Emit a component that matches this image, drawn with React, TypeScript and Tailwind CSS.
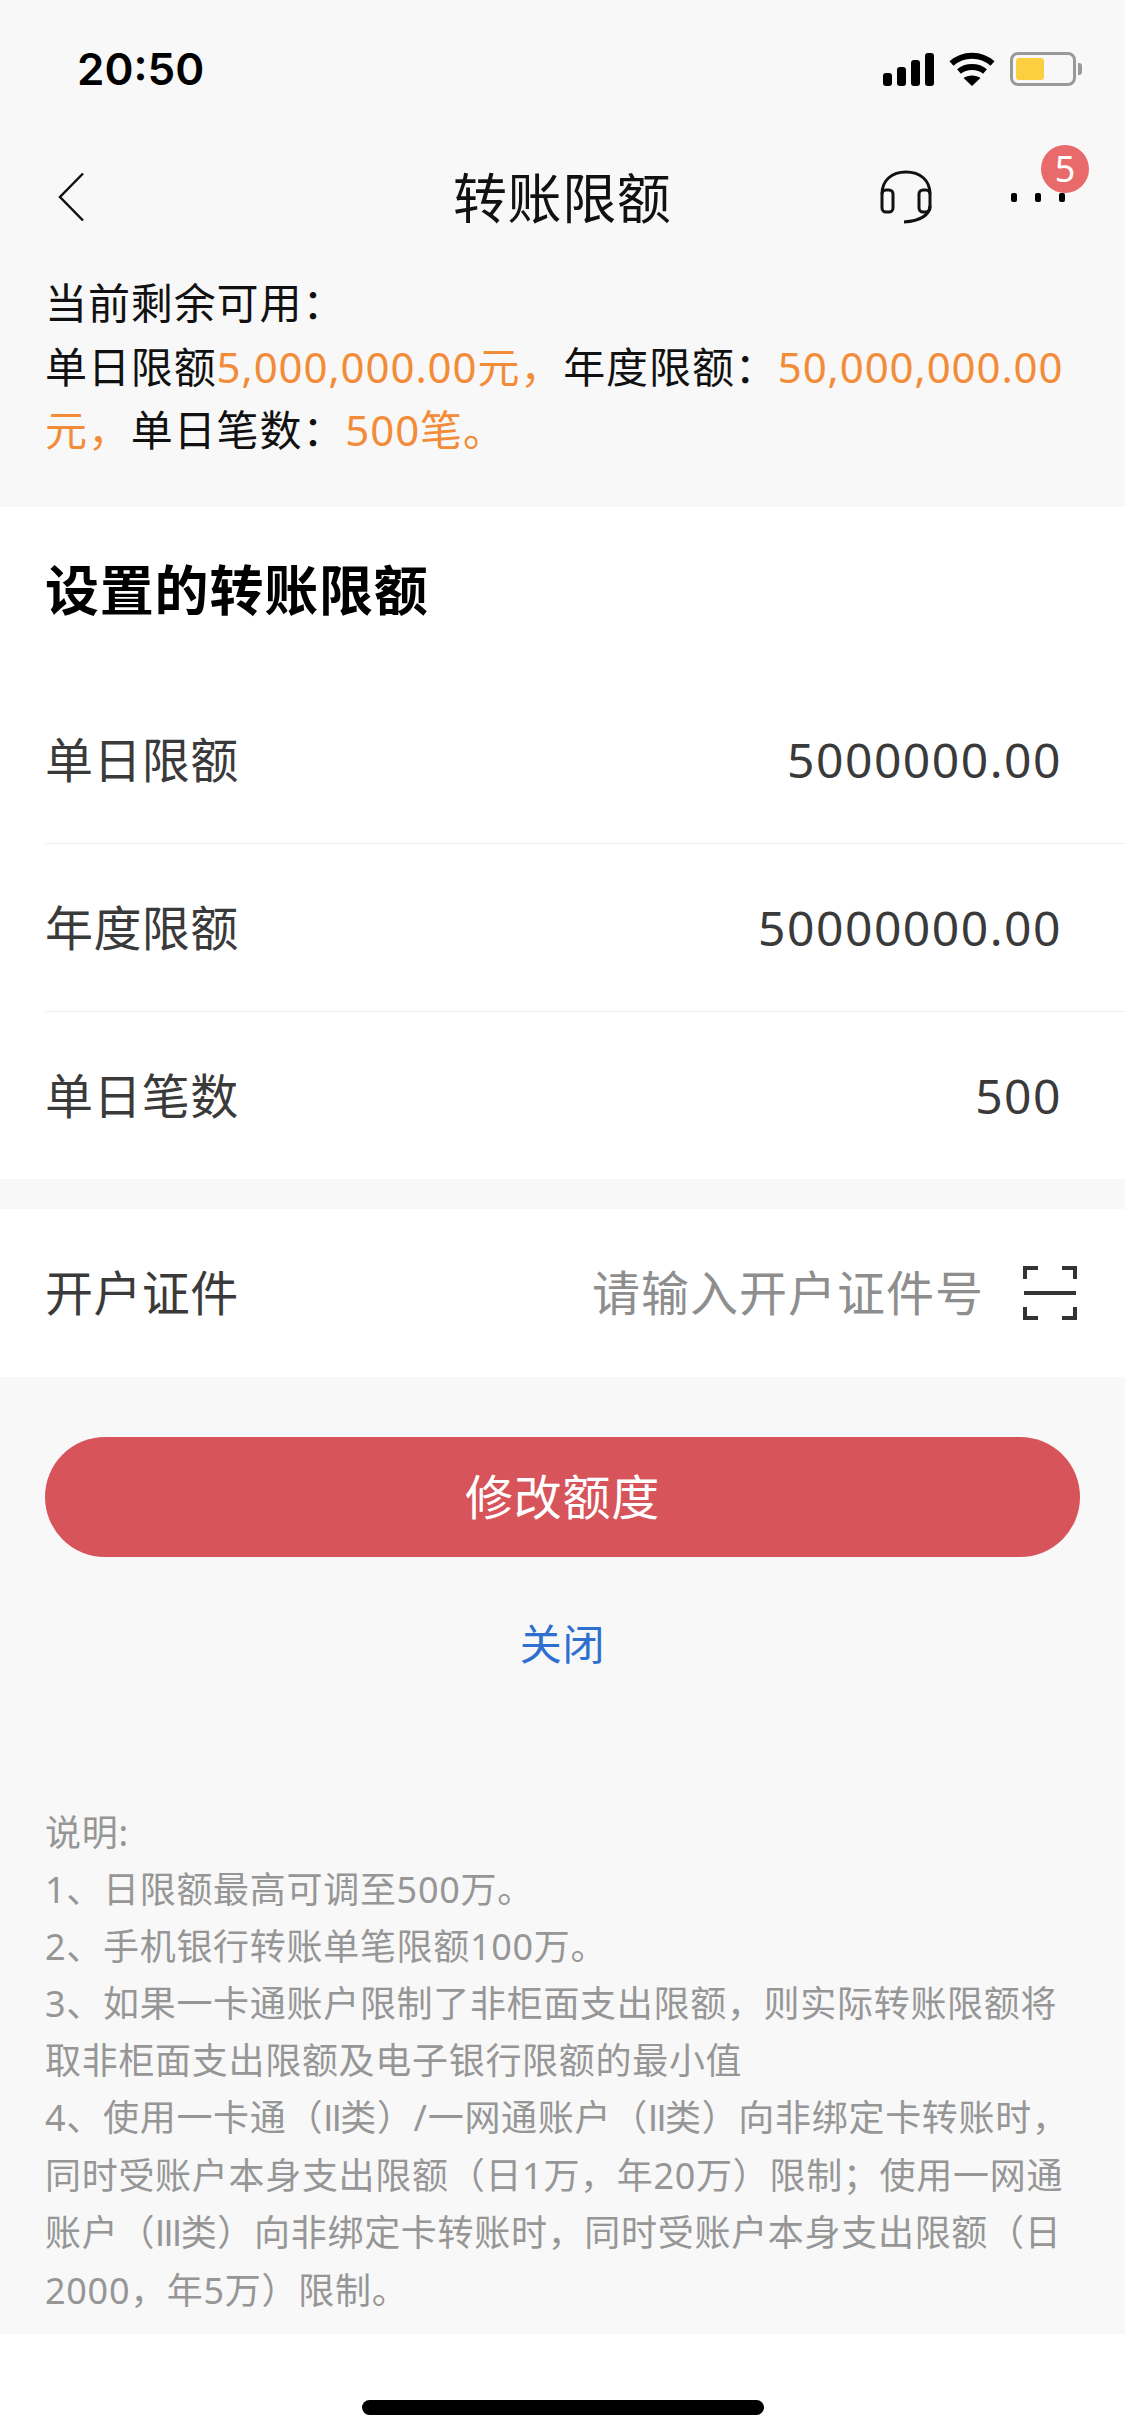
const orange = "text-[#f28c38]";

function StatusBar() {
  return (
    <div className="flex h-[136px] items-center justify-between pl-[77px] pr-[43px] pt-[2px]">
      <span className="font-['Inter'] text-[44px] font-semibold text-black">20:50</span>
      <div className="flex items-center gap-[15px]">
        <svg width="51" height="33" viewBox="0 0 51 33" fill="#000">
          <rect x="0" y="20" width="9" height="13" rx="3" />
          <rect x="14" y="14" width="9" height="19" rx="3" />
          <rect x="28" y="7" width="9" height="26" rx="3" />
          <rect x="42" y="0" width="9" height="33" rx="3" />
        </svg>
        <svg width="46" height="34" viewBox="0 0 46 34" fill="none" stroke="#000" strokeWidth="6">
          <path d="M2.5 11.5C14 1 32 1 43.5 11.5" />
          <path d="M10 19.5C17 13.5 29 13.5 36 19.5" />
          <path d="M23 34L14.5 26C19 22.500 27 22.500 31.500 26Z" fill="#000" stroke="none" />
        </svg>
        <div className="flex items-center gap-[2px]">
          <div className="h-[34px] w-[66px] rounded-[8px] border-[3px] border-[#999999] p-[3px]">
            <div className="h-full w-[28px] rounded-[3px] bg-[#fbcf3f]" />
          </div>
          <div className="h-[12px] w-[4px] rounded-r-[3px] bg-[#999999]" />
        </div>
      </div>
    </div>
  );
}

function NavBar() {
  return (
    <div className="relative flex h-[122px] items-center justify-between pl-[57px] pr-[60px]">
      <svg width="28" height="50" viewBox="0 0 28 50" fill="none" stroke="#111" strokeWidth="2.500">
        <path d="M26 1.500L3 25L26 48.500" />
      </svg>
      <span className="absolute left-[453px] top-[31px] text-[54px] leading-[62px] tracking-[0.6px] text-[#111]">转账限额</span>
      <div className="flex items-center gap-[78px]">
        <svg width="54" height="54" viewBox="0 0 54 54" fill="none" stroke="#111" strokeWidth="3">
          <path d="M3 24C3 10 13 2 27 2C41 2 51 10 51 24" />
          <rect x="3" y="20" width="11" height="22" rx="4" />
          <rect x="40" y="20" width="11" height="22" rx="4" />
          <path d="M51 36C50 46 40 51 25 52" />
        </svg>
        <div className="relative flex gap-[18px]">
          <div className="h-[9px] w-[6px] rounded-[2px] bg-black" />
          <div className="h-[9px] w-[6px] rounded-[2px] bg-black" />
          <div className="h-[9px] w-[6px] rounded-[2px] bg-black" />
          <div className="absolute left-[30px] top-[-48px] flex h-[48px] w-[48px] items-center justify-center rounded-full bg-[#e96a6a] text-[36px] leading-none text-white">
            5
          </div>
        </div>
      </div>
    </div>
  );
}

function LimitRow({ label, value, height, border }: { label: string; value: string; height: string; border?: boolean }) {
  return (
    <div className={`ml-[45px] flex items-center justify-between pr-[63px] text-[48px] tracking-[0.4px] text-[#3a3a3a] ${height} ${border ? "border-b border-[#eeeeee]" : ""}`}>
      <span>{label}</span>
      <span className="tracking-[1.500px]">{value}</span>
    </div>
  );
}

// roman numerals in the notes are thin and tight in the reference
function Roman({ children }: { children: string }) {
  return <span className="font-['Liberation_Sans'] tracking-[-1.500px]">{children}</span>;
}

export default function App() {
  return (
    <div className="h-[2436px] w-[1125px] overflow-hidden bg-white font-['Noto_Sans','Noto_Sans_CJK_SC',sans-serif]">
      <div className="h-[2334px] bg-[#f8f8f8]">
        <StatusBar />
        <NavBar />
        <div className="h-[249px] pl-[45px] pt-[13px] text-[42px] leading-[63.500px] tracking-[0.9px] whitespace-nowrap text-[#111]">
          <div>当前剩余可用：</div>
          <div>
            单日限额<span className={orange}>5,000,000.00元，</span>年度限额：
            <span className={orange}>50,000,000.00</span>
          </div>
          <div>
            <span className={orange}>元，</span>单日笔数：<span className={orange}>500笔。</span>
          </div>
        </div>

        <div className="h-[672px] bg-white">
          <div className="flex h-[169px] items-center pl-[45px] pb-[2px] text-[54px] font-bold tracking-[0.8px] text-black">设置的转账限额</div>
          <LimitRow label="单日限额" value="5000000.00" height="h-[168px]" border />
          <LimitRow label="年度限额" value="50000000.00" height="h-[168px]" border />
          <LimitRow label="单日笔数" value="500" height="h-[167px]" />
        </div>

        <div className="mt-[30px] flex h-[168px] items-center justify-between bg-white pl-[45px] pr-[48px]">
          <span className="text-[48px] tracking-[0.4px] text-[#3a3a3a]">开户证件</span>
          <div className="flex items-center gap-[39px]">
            <span className="text-[48px] tracking-[1px] text-[#8e8e8e]">请输入开户证件号</span>
            <svg width="54" height="54" viewBox="0 0 54 54" fill="none" stroke="#333" strokeWidth="4">
              <path d="M2 13V2H15M39 2H52V13M2 41V52H15M39 52H52V41" />
              <path d="M1 27H53" />
            </svg>
          </div>
        </div>

        <div className="mx-[45px] mt-[60px] flex h-[120px] items-center justify-center rounded-full bg-[#d7545a] text-[48px] tracking-[0.8px] text-white">修改额度</div>
        <div className="mt-[57px] text-center text-[42px] leading-[60px] tracking-[0.8px] text-[#2f6fd0]">关闭</div>

        <div className="mt-[130px] pl-[45px] text-[36px] leading-[57px] tracking-[0.7px] whitespace-nowrap text-[#969696]">
          <div>说明:</div>
          <div>1、日限额最高可调至500万。</div>
          <div>2、手机银行转账单笔限额100万。</div>
          <div>3、如果一卡通账户限制了非柜面支出限额，则实际转账限额将</div>
          <div>取非柜面支出限额及电子银行限额的最小值</div>
          <div>
            4、使用一卡通（<Roman>II</Roman>类）/一网通账户（<Roman>II</Roman>类）向非绑定卡转账时，
          </div>
          <div>同时受账户本身支出限额（日1万，年20万）限制；使用一网通</div>
          <div>
            账户（<Roman>III</Roman>类）向非绑定卡转账时，同时受账户本身支出限额（日
          </div>
          <div>2000，年5万）限制。</div>
        </div>
      </div>
      <div className="flex justify-center pt-[66px]">
        <div className="h-[15px] w-[402px] rounded-full bg-black" />
      </div>
    </div>
  );
}
